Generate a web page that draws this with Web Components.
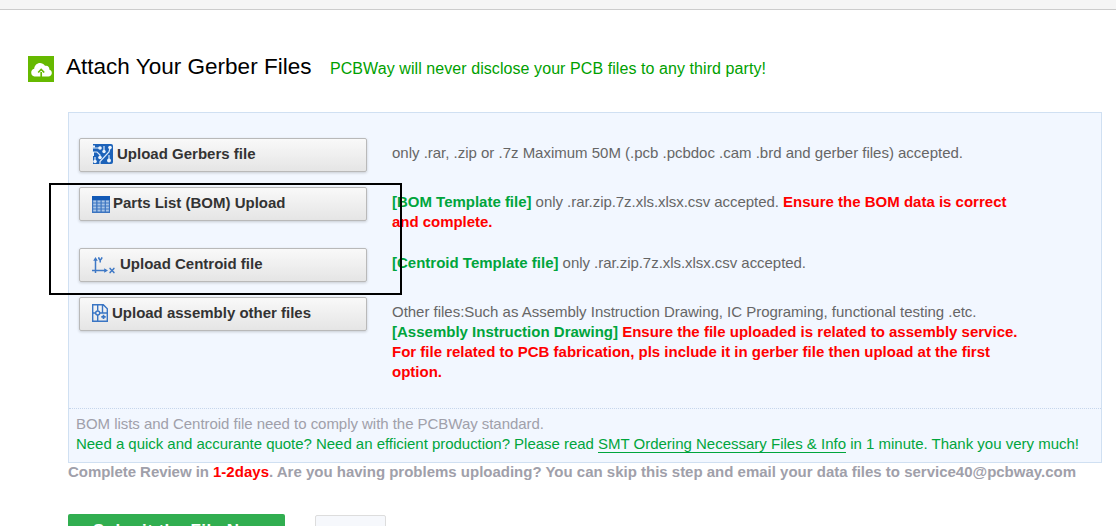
<!DOCTYPE html>
<html lang="en"><head><meta charset="utf-8"><title>Attach Your Gerber Files</title>
<style>html,body{margin:0;height:100%;overflow:hidden;background:#fff}body{font:15px/20px "Liberation Sans",Arial,sans-serif;color:#666}</style></head><body>
<upload-page></upload-page>
<script>
const define=(name,html,init)=>customElements.define(name,class extends HTMLElement{
  constructor(){super();this.attachShadow({mode:'open'}).innerHTML=html;}
  connectedCallback(){if(init)init(this);}
});

/* A single line of text tracked to occupy the given measure. */
define('text-run','<style>:host{display:inline-block;white-space:nowrap;vertical-align:top}</style><slot></slot>',el=>{
  const w=+el.getAttribute('w');
  const n=el.textContent.length;
  const natural=el.getBoundingClientRect().width;
  el.style.letterSpacing=((w-natural)/n)+'px';
  el.style.width=w+'px';
});

const icons={
 board:`<svg width="21" height="20" viewBox="0 0 21 20"><path d="M1 0h18a2 2 0 0 1 2 2v16a2 2 0 0 1-2 2H1z" fill="#1c62b9"/><g fill="none" stroke="#dce9f8" stroke-width="1.2"><path d="M0 4h8M0 8h5l3 3v3M18 4l-1 4-9 9.500v2.500M12 2v5M17 11v5M3 13v4"/></g><g fill="#edf4fc"><circle cx="8" cy="4" r="1.8"/><circle cx="12" cy="7.500" r="1.7"/><circle cx="18" cy="3.500" r="1.8"/><circle cx="8" cy="13.500" r="1.8"/><circle cx="3" cy="17.500" r="1.8"/><circle cx="17" cy="16.500" r="2"/><path d="M0 1.500h3v2H0zM0 8h2v4H0z"/></g></svg>`,
 table:`<svg width="18" height="17" viewBox="0 0 18 17"><path d="M0 0h18v17H0z" fill="#3b74c0"/><path d="M0 0h18v4H0z" fill="#1259b6"/><g fill="#a9c5e7"><path d="M1.2 4.5h3v2h-3zM5.5 4.5h3v2h-3zM9.7 4.5h3v2h-3zM13.9 4.5h3v2h-3zM1.2 7.5h3v2h-3zM5.5 7.5h3v2h-3zM9.7 7.5h3v2h-3zM13.9 7.5h3v2h-3zM1.2 10.5h3v2h-3zM5.5 10.5h3v2h-3zM9.7 10.5h3v2h-3zM13.9 10.5h3v2h-3zM1.2 13.6h3v2h-3zM5.5 13.6h3v2h-3zM9.7 13.6h3v2h-3zM13.9 13.6h3v2h-3z"/></g></svg>`,
 axes:`<svg width="23" height="17" viewBox="0 0 23 17"><g fill="none" stroke="#3e78c5" stroke-width="1.5"><path d="M3.5 2v14M0 13.5h14"/><path d="M6.500 1l1.700 2.300L10 1M8.200 3v2.500M18 11.500l4 4M22 11.500l-4 4"/><path d="M6 .8h1.500M9 .8h1.500M17.300 11.300H19M21 11.300h1.700M17.300 15.700H19M21 15.700h1.700" stroke-width="1"/></g><path d="M3.500 0l2.300 3.800H1.200zM16 13.500l-3.800 2.300v-4.600z" fill="#3e78c5"/></svg>`,
 drawing:`<svg width="16" height="18" viewBox="0 0 16 18"><g fill="none" stroke="#3975c4" stroke-width="1.4"><path d="M.7.7h10.600l4 4v12.600H.7zM5.700.7v6M5.700 11v6.300M.7 9h3M7.800 9h7.500M10.500 1v8"/><circle cx="5.700" cy="9" r="2"/><path d="M11.500 10.700v4.400M9.300 12.900h4.400" stroke-width="1.700"/></g></svg>`
};

customElements.define('upload-button',class extends HTMLElement{
 constructor(){super();this.attachShadow({mode:'open'}).innerHTML=`<style>
 :host{display:flex;box-sizing:border-box;width:288px;height:34px;border:1px solid #b9b9b9;border-radius:2px;background:linear-gradient(#f9f9f9,#e5e5e5);box-shadow:0 1px 3px rgba(0,0,0,.18);align-items:center;padding:0 0 2px 12px;color:#333;font-weight:700;gap:var(--gap,4px)}
 svg{display:block;flex:none}.i{margin-top:var(--drop,0px)}</style><span class="i">${icons[this.getAttribute('icon')]}</span><slot></slot>`;}
});

define('upload-row',`<style>:host{display:grid;grid-template-columns:313px 1fr;height:var(--h)}.t{padding-top:5px}</style><div><slot name="action"></slot></div><div class="t"><slot></slot></div>`);

define('page-heading',`<style>:host{display:flex;height:45px;align-items:flex-start;padding:46px 0 11px 28px;color:#000;font-size:22.5px;line-height:22px}
svg{display:block;margin:0 12px 0 0;flex:none}.title{width:264px}.note{color:#00a000;font-size:16px;padding-top:2px}</style>
<span class="icon"><svg width="26" height="26" viewBox="0 0 26 26"><path d="M0 0h26v26H0z" fill="#66b900"/><path d="M6.500 20.500a4 4 0 0 1-.3-7.800C6.500 7 13.500 4.500 17 9.800c2.800-.7 4.700 1.300 4.300 3.700 3.800 1.200 3.200 7-1 7z" fill="#fff"/><path d="M13.200 21v-5M10.200 16.500l3-3 3 3" fill="none" stroke="#66b900" stroke-width="1.700"/></svg></span>
<span class="title"><slot name="title"></slot></span><span class="note"><slot></slot></span>`);

define('upload-panel',`<style>:host{display:block;box-sizing:border-box;margin-left:68px;width:1034px;height:351px;border:1px solid #d0e0f2;background:#f2f7ff}
.rows{padding:25px 0 0 10px;height:270px}.foot{border-top:1px dotted #c5d5eb;padding:5px 0 0 7px}</style><div class="rows"><slot></slot></div><div class="foot"><slot name="foot"></slot></div>`);

define('highlight-frame','<style>:host{position:absolute;box-sizing:border-box;left:49px;top:183px;width:353px;height:112px;border:2px solid #000;pointer-events:none}</style>');

define('action-bar',`<style>:host{display:flex;padding:33px 0 0 68px;gap:30px}
.submit{box-sizing:border-box;width:217px;height:40px;border-radius:2px;background:#31ae50;color:#fff;font:700 17px/20px "Liberation Sans",Arial,sans-serif;padding:7px 0 0 25px}
.other{box-sizing:border-box;width:71px;height:40px;margin-top:1px;border:1px solid #ddd;border-radius:2px;background:#f6f8fc}</style><div class="submit"><slot></slot></div><div class="other"></div>`);

define('upload-page',`<style>
:host{display:block;position:relative;height:526px;overflow:hidden}
.top{box-sizing:border-box;height:10px;background:#f5f5f5;border-bottom:1px solid #ccc}
.g{color:#00a53c}.r{color:#f00}.m{color:#a0a0aa}.review{padding-left:68px;height:19px;margin-top:-1px;font-weight:700}.link{border-bottom:1px solid #00a53c;line-height:20px;height:18px}
</style>
<div class="top"></div>
<page-heading><text-run slot="title" w="245.500">Attach Your Gerber Files</text-run><text-run w="436">PCBWay will never disclose your PCB files to any third party!</text-run></page-heading>
<upload-panel>
<upload-row style="--h:49px"><upload-button slot="action" icon="board"><text-run w="138.500">Upload Gerbers file</text-run></upload-button><text-run w="571">only .rar, .zip or .7z Maximum 50M (.pcb .pcbdoc .cam .brd and gerber files) accepted.</text-run></upload-row>
<upload-row style="--h:61px"><upload-button slot="action" icon="table" style="--gap:3px;--drop:2px"><text-run w="172.500">Parts List (BOM) Upload</text-run></upload-button><text-run class="g" w="139.500"><b>[BOM Template file]</b></text-run><text-run w="251.500">&nbsp;only .rar.zip.7z.xls.xlsx.csv accepted.&nbsp;</text-run><text-run class="r" w="223.500"><b>Ensure the BOM data is correct</b></text-run><br><text-run class="r" w="100.500"><b>and complete.</b></text-run></upload-row>
<upload-row style="--h:49px"><upload-button slot="action" icon="axes" style="--gap:5px;--drop:2px"><text-run w="142.500">Upload Centroid file</text-run></upload-button><text-run class="g" w="166.500"><b>[Centroid Template file]</b></text-run><text-run w="247.500">&nbsp;only .rar.zip.7z.xls.xlsx.csv accepted.</text-run></upload-row>
<upload-row style="--h:100px"><upload-button slot="action" icon="drawing"><text-run w="199">Upload assembly other files</text-run></upload-button><text-run w="584.500">Other files:Such as Assembly Instruction Drawing, IC Programing, functional testing .etc.</text-run><br><text-run class="g" w="226"><b>[Assembly Instruction Drawing]</b></text-run><text-run class="r" w="399.500"><b>&nbsp;Ensure the file uploaded is related to assembly service.</b></text-run><br><text-run class="r" w="598"><b>For file related to PCB fabrication, pls include it in gerber file then upload at the first</b></text-run><br><text-run class="r" w="50"><b>option.</b></text-run></upload-row>
<div slot="foot"><text-run class="m" w="468">BOM lists and Centroid file need to comply with the PCBWay standard.</text-run><br><text-run class="g" w="522">Need a quick and accurante quote? Need an efficient production? Please read&nbsp;</text-run><text-run class="g link" w="248">SMT Ordering Necessary Files &amp; Info</text-run><text-run class="g" w="233">&nbsp;in 1 minute. Thank you very much!</text-run></div>
</upload-panel>
<div class="review m"><text-run w="145">Complete Review in&nbsp;</text-run><text-run class="r" w="56">1-2days</text-run><text-run w="807">. Are you having problems uploading? You can skip this step and email your data files to service40@pcbway.com</text-run></div>
<action-bar><text-run w="171">Submit the File Now</text-run></action-bar>
<highlight-frame></highlight-frame>`);
</script></body></html>
